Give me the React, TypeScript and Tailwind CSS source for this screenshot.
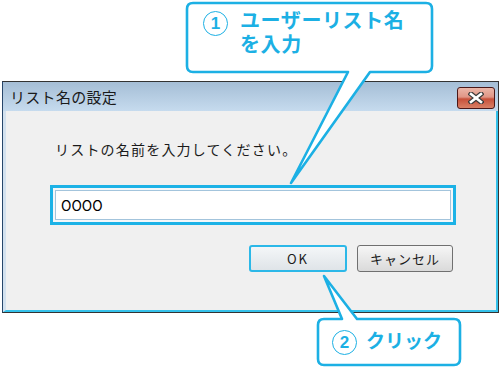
import React from 'react';

const CYAN = '#1cb0e4';

function CircledNum({ n }: { n: string }) {
  return (
    <div className="w-[25px] h-[25px] rounded-full border-[1.5px] border-[#1cb0e4] flex items-center justify-center text-[#1cb0e4] text-[17px] font-bold leading-none font-['Liberation_Sans',sans-serif]">
      {n}
    </div>
  );
}

function CloseGlyph() {
  return (
    <svg width="16" height="12" viewBox="0 0 16 12">
      <line x1="3" y1="2" x2="13" y2="10" stroke="#3a3a3a" strokeWidth="5" strokeLinecap="square" />
      <line x1="13" y1="2" x2="3" y2="10" stroke="#3a3a3a" strokeWidth="5" strokeLinecap="square" />
      <line x1="3" y1="2" x2="13" y2="10" stroke="#ffffff" strokeWidth="2.6" strokeLinecap="square" />
      <line x1="13" y1="2" x2="3" y2="10" stroke="#ffffff" strokeWidth="2.6" strokeLinecap="square" />
    </svg>
  );
}

export default function App() {
  return (
    <div className="relative w-[500px] h-[368px] bg-white overflow-hidden font-['Noto_Sans_CJK_JP',sans-serif]">
      {/* Dialog window */}
      <div className="pt-[81px] pl-[2px]">
        <div className="w-[497px] h-[232px] flex flex-col border border-[#333333] border-l-[#27466a] bg-[#f0f0f0]">
          <div className="h-[29px] flex items-center justify-between pl-[7px] pr-[3px] bg-gradient-to-b from-[#a5bed6] to-[#c6dbee]">
            <span className="text-[15px] leading-none text-[#1a1a1a] tracking-[0.3px]">リスト名の設定</span>
            <div className="w-[38px] h-[22px] mt-[2px] rounded-[3px] border border-[#4a1818] flex items-center justify-center bg-[linear-gradient(to_bottom,#ebb6a8_0%,#e09686_45%,#c7503a_55%,#d98066_100%)]">
              <CloseGlyph />
            </div>
          </div>

          <div className="flex-1 border-l-[3px] border-l-[#d3e1ee] border-r-[2px] border-r-[#34c1ea] border-b-[2px] border-b-[#34c1ea]">
            <p className="ml-[49px] mt-[30px] text-[14px] leading-[16px] tracking-[1.2px] text-[#1a1a1a]">
              リストの名前を入力してください。
            </p>

            {/* Input with highlight */}
            <div className="ml-[44px] mt-[28px] w-[406px] h-[40px] border-[3px] border-[#1cb2e6] bg-[#f4f7f9] p-[2px]">
              <div className="h-full border border-[#a3c4dc] bg-white flex items-center pl-[5px]">
                <span className="text-[14px] leading-none text-black">OOOO</span>
              </div>
            </div>

            {/* Buttons */}
            <div className="ml-[243px] mt-[20px] flex gap-[10px]">
              <div className="w-[98px] h-[27px] rounded-[3px] border-2 border-[#2cb8e8] bg-gradient-to-b from-[#f4f6f8] to-[#dfe4e8] flex items-center justify-center">
                <span className="text-[13px] leading-none text-[#1a1a1a] tracking-[2px]">OK</span>
              </div>
              <div className="w-[96px] h-[27px] rounded-[3px] border border-[#707070] bg-gradient-to-b from-[#f6f6f6] to-[#dadada] flex items-center justify-center">
                <span className="text-[13px] leading-none text-[#1a1a1a] tracking-[1px]">キャンセル</span>
              </div>
            </div>
          </div>
        </div>
      </div>

      {/* Callout outlines */}
      <svg className="absolute left-0 top-0 pointer-events-none" width="500" height="368" viewBox="0 0 500 368">
        <path
          d="M193,3 H426 Q432,3 432,9 V66 Q432,72 426,72 H370 L291,183 L348,72 H193 Q187,72 187,66 V9 Q187,3 193,3 Z"
          fill="#ffffff"
          stroke={CYAN}
          strokeWidth="2.6"
          strokeLinejoin="round"
        />
        <path
          d="M324,319 H342 L324,276 L357,319 H454 Q460,319 460,325 V359 Q460,365 454,365 H324 Q318,365 318,359 V325 Q318,319 324,319 Z"
          fill="#ffffff"
          stroke={CYAN}
          strokeWidth="2.6"
          strokeLinejoin="round"
        />
      </svg>

      {/* Callout 1 text */}
      <div className="absolute left-[203px] top-[11px] flex gap-[12px]">
        <CircledNum n="1" />
        <div className="flex flex-col -mt-[1px] text-[20px] leading-[22px] font-bold tracking-[0.6px] text-[#1cb0e4] font-['Liberation_Sans','Noto_Sans_CJK_JP',sans-serif]">
          <span>ユーザーリスト名</span>
          <span className="mt-[2px]">を入力</span>
        </div>
      </div>

      {/* Callout 2 text */}
      <div className="absolute left-[332px] top-[329px] flex items-center gap-[9px]">
        <CircledNum n="2" />
        <span className="text-[19px] leading-[26px] font-bold text-[#1cb0e4] font-['Liberation_Sans','Noto_Sans_CJK_JP',sans-serif]">
          クリック
        </span>
      </div>
    </div>
  );
}
